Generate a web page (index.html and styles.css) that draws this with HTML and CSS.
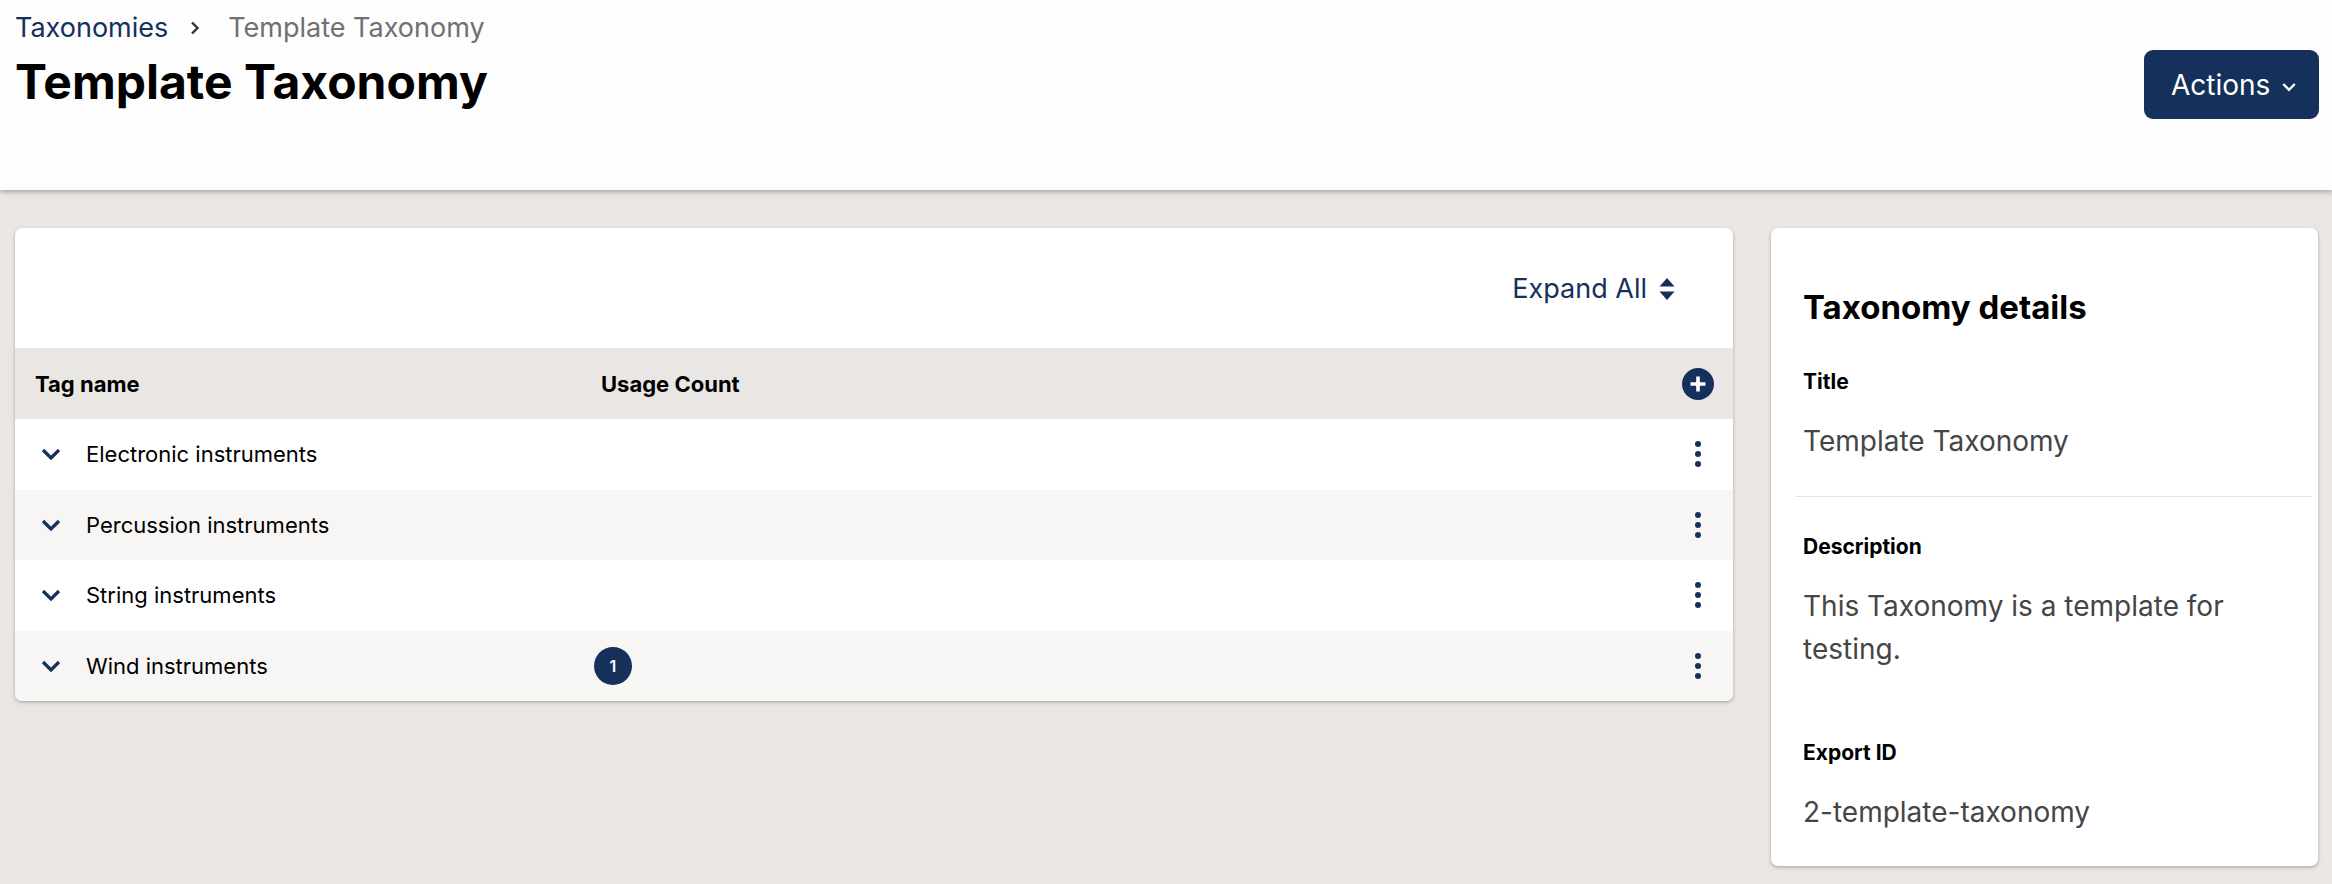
FILE: index.html
```html
<!DOCTYPE html>
<html lang="en">
<head>
<meta charset="utf-8">
<title>Template Taxonomy</title>
<link rel="stylesheet" href="styles.css">
</head>
<body>
<header class="page-header">
  <div class="header-main">
    <nav class="breadcrumb">
      <a class="crumb-link" href="#">Taxonomies</a>
      <svg class="crumb-sep" viewBox="0 0 10 14" width="10" height="14"><path d="M2 1.5 L7.5 7 L2 12.5" fill="none" stroke="#333" stroke-width="2.4"/></svg>
      <span class="crumb-current">Template Taxonomy</span>
    </nav>
    <h1 class="page-title">Template Taxonomy</h1>
  </div>
  <button class="actions-btn">Actions
    <svg class="actions-caret" viewBox="0 0 14 10" width="14" height="10"><path d="M1.2 2 L7 7.8 L12.8 2" fill="none" stroke="#fff" stroke-width="2.4"/></svg>
  </button>
</header>

<main class="content">
  <section class="card tags-card">
    <div class="toolbar">
      <button class="expand-all">Expand All
        <svg class="sort-icon" viewBox="0 0 16 22" width="16" height="22"><path d="M8 0 L15.5 8.5 H0.5 Z M0.5 13.5 H15.5 L8 22 Z" fill="#15305a"/></svg>
      </button>
    </div>
    <div class="table">
      <div class="trow thead">
        <div class="cell">Tag name</div>
        <div class="cell usage-head">Usage Count</div>
        <div class="cell action">
          <svg class="plus-icon" viewBox="0 0 32 32" width="32" height="32"><circle cx="16" cy="16" r="16" fill="#15305a"/><path d="M16 8.5 V23.5 M8.5 16 H23.5" stroke="#fff" stroke-width="3.6"/></svg>
        </div>
      </div>
      <div class="trow">
        <div class="cell name"><svg class="row-caret" viewBox="0 0 20 12" width="20" height="12"><path d="M2 2 L10 10 L18 2" fill="none" stroke="#15305a" stroke-width="3.2"/></svg>Electronic instruments</div>
        <div class="cell"></div>
        <div class="cell action"><span class="kebab"><i></i><i></i><i></i></span></div>
      </div>
      <div class="trow alt">
        <div class="cell name"><svg class="row-caret" viewBox="0 0 20 12" width="20" height="12"><path d="M2 2 L10 10 L18 2" fill="none" stroke="#15305a" stroke-width="3.2"/></svg>Percussion instruments</div>
        <div class="cell"></div>
        <div class="cell action"><span class="kebab"><i></i><i></i><i></i></span></div>
      </div>
      <div class="trow">
        <div class="cell name"><svg class="row-caret" viewBox="0 0 20 12" width="20" height="12"><path d="M2 2 L10 10 L18 2" fill="none" stroke="#15305a" stroke-width="3.2"/></svg>String instruments</div>
        <div class="cell"></div>
        <div class="cell action"><span class="kebab"><i></i><i></i><i></i></span></div>
      </div>
      <div class="trow alt">
        <div class="cell name"><svg class="row-caret" viewBox="0 0 20 12" width="20" height="12"><path d="M2 2 L10 10 L18 2" fill="none" stroke="#15305a" stroke-width="3.2"/></svg>Wind instruments</div>
        <div class="cell"><span class="badge">1</span></div>
        <div class="cell action"><span class="kebab"><i></i><i></i><i></i></span></div>
      </div>
    </div>
  </section>

  <aside class="card details-card">
    <h2 class="details-title">Taxonomy details</h2>
    <div class="field">
      <div class="field-label">Title</div>
      <div class="field-value">Template Taxonomy</div>
    </div>
    <hr class="divider">
    <div class="field">
      <div class="field-label">Description</div>
      <div class="field-value">This Taxonomy is a template for testing.</div>
    </div>
    <div class="field export">
      <div class="field-label">Export ID</div>
      <div class="field-value">2-template-taxonomy</div>
    </div>
  </aside>
</main>
</body>
</html>
```

FILE: styles.css
```css
* { box-sizing: border-box; }

html, body {
  margin: 0;
  padding: 0;
}

body {
  background: #e9e6e3;
  font-family: Inter, "Liberation Sans", sans-serif;
  color: #000;
  height: 884px;
  overflow: hidden;
}

.page-header {
  background: #fdfdfd;
  height: 190px;
  display: flex;
  justify-content: space-between;
  align-items: flex-start;
  padding: 0 13px 0 15px;
  box-shadow: 0 2px 5px rgba(0, 0, 0, 0.28);
  position: relative;
  z-index: 1;
}

.header-main {
  padding-top: 8px;
}

.breadcrumb {
  display: flex;
  align-items: center;
  font-size: 27px;
  line-height: 40px;
  height: 40px;
}

.crumb-link {
  color: #15305a;
  text-decoration: none;
}

.crumb-sep {
  margin: 0 28px 0 22px;
}

.crumb-current {
  color: #707070;
}

.page-title {
  margin: 6px 0 0;
  font-size: 48px;
  line-height: 56px;
  font-weight: 700;
}

.actions-btn {
  margin-top: 50px;
  height: 69px;
  width: 175px;
  background: #15305a;
  color: #fff;
  border: 0;
  border-radius: 9px;
  font-family: inherit;
  font-size: 28px;
  display: flex;
  align-items: center;
  justify-content: flex-start;
  padding: 0 0 0 27px;
  gap: 12px;
}

.actions-caret {
  margin-top: 4px;
}

.content {
  display: grid;
  grid-template-columns: 1718px 547px;
  column-gap: 38px;
  align-items: start;
  padding: 38px 14px 0 15px;
}

.card {
  background: #fff;
  border-radius: 7px;
  box-shadow: 0 1px 3px rgba(0, 0, 0, 0.18), 0 2px 4px rgba(0, 0, 0, 0.12);
  overflow: hidden;
}

.toolbar {
  height: 120px;
  display: flex;
  justify-content: flex-end;
  align-items: center;
  padding-right: 58px;
}

.expand-all {
  background: none;
  border: 0;
  padding: 0;
  font-family: inherit;
  font-size: 27px;
  color: #15305a;
  display: flex;
  align-items: center;
  gap: 12px;
}

.sort-icon {
  margin-top: 2px;
}

.trow {
  display: grid;
  grid-template-columns: 559px 1fr 32px;
  align-items: center;
  height: 70.5px;
  padding: 0 19px 0 20px;
  font-size: 22px;
  background: #fff;
}

.trow.alt {
  background: #f7f6f4;
}

.trow.thead {
  height: 71px;
  background: #e9e6e3;
  font-weight: 700;
}

.usage-head {
  padding-left: 7px;
}

.cell {
  display: flex;
  align-items: center;
}

.cell.action {
  justify-content: center;
}

.name .row-caret {
  margin: 0 25px 0 6px;
}

.badge {
  width: 38px;
  height: 38px;
  border-radius: 50%;
  background: #15305a;
  color: #fff;
  font-size: 16px;
  font-weight: 600;
  display: flex;
  align-items: center;
  justify-content: center;
}

.kebab {
  display: flex;
  flex-direction: column;
  align-items: center;
  gap: 4px;
}

.kebab i {
  display: block;
  width: 6px;
  height: 6px;
  border-radius: 50%;
  background: #15305a;
}

.details-card {
  padding: 59px 32px 32px;
}

.details-title {
  margin: 0 0 40px;
  font-size: 33px;
  line-height: 40px;
  font-weight: 700;
}

.field-label {
  font-size: 21px;
  line-height: 30px;
  font-weight: 700;
}

.field-value {
  margin-top: 23px;
  font-size: 28px;
  line-height: 43px;
  color: #454545;
}

.divider {
  border: 0;
  border-top: 1px solid #e4e2df;
  margin: 33px -26px 35px -8px;
}

.field.export {
  margin-top: 67px;
}
```
